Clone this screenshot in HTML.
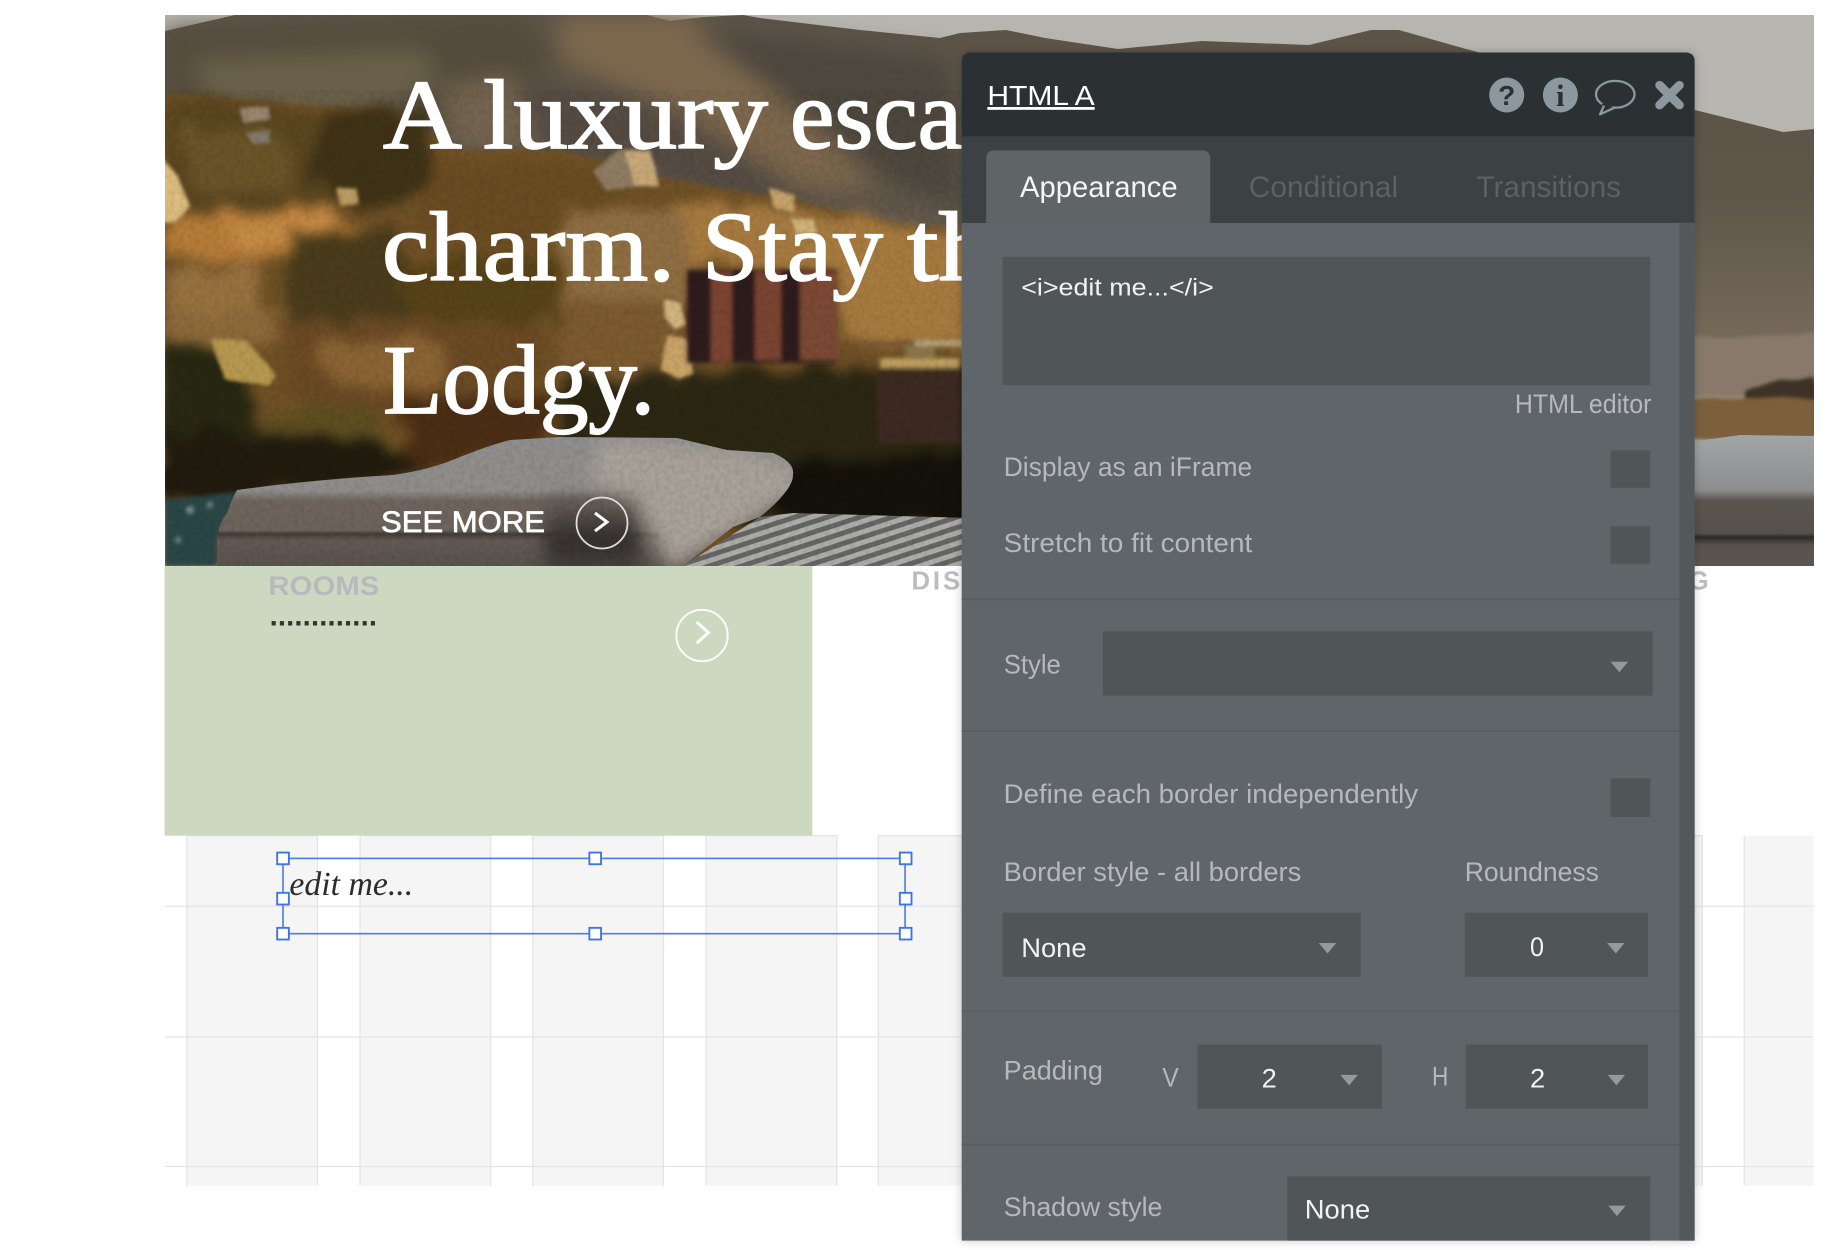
<!DOCTYPE html>
<html lang="en">
<head>
<meta charset="utf-8">
<title>HTML A</title>
<style>
html,body{margin:0;padding:0;background:#fff;width:1830px;height:1250px;overflow:hidden}
svg{display:block;position:absolute;left:0;top:0}
text{font-family:"Liberation Sans",sans-serif}
.lab{font-size:23px;fill:#b5b9bb}
.val{font-size:23px;fill:#f1f2f2}
.sel{fill:#505557}
.tri{fill:#94999c}
.hd{font-family:"Liberation Serif",serif;font-size:99px;fill:#fff;stroke:#fff;stroke-width:1.7px}
</style>
</head>
<body>
<svg width="1830" height="1250" viewBox="0 0 1830 1250" xmlns="http://www.w3.org/2000/svg">
<defs>
<clipPath id="hc"><rect x="165" y="15" width="1649" height="551"/></clipPath>
<clipPath id="towel"><path d="M237 490Q310 480 393 475Q430 470 460 457Q490 445 510 440L560 437L677 438L727 450L773 453Q795 462 793 475Q793 490 760 517L733 527L683 566L217 566L217 540Q218 525 227 513Q232 498 237 490Z"/></clipPath>
<filter id="b3" x="-20%" y="-20%" width="140%" height="140%"><feGaussianBlur stdDeviation="2"/></filter>
<filter id="b7" x="-30%" y="-30%" width="160%" height="160%"><feGaussianBlur stdDeviation="9"/></filter>
<filter id="b14" x="-30%" y="-30%" width="160%" height="160%"><feGaussianBlur stdDeviation="12"/></filter>
<filter id="org" x="-5%" y="-5%" width="110%" height="110%" color-interpolation-filters="sRGB">
<feTurbulence type="fractalNoise" baseFrequency=".03" numOctaves="3" seed="7" result="t"/>
<feDisplacementMap in="SourceGraphic" in2="t" scale="34" xChannelSelector="R" yChannelSelector="G"/>
<feGaussianBlur stdDeviation="6"/>
</filter>
<filter id="org2" x="-5%" y="-5%" width="110%" height="110%" color-interpolation-filters="sRGB">
<feTurbulence type="fractalNoise" baseFrequency=".02" numOctaves="2" seed="3" result="t"/>
<feDisplacementMap in="SourceGraphic" in2="t" scale="8" xChannelSelector="R" yChannelSelector="G"/>
<feGaussianBlur stdDeviation="1.800"/>
</filter>
<filter id="noise" x="0" y="0" width="100%" height="100%">
<feTurbulence type="fractalNoise" baseFrequency=".2" numOctaves="3" seed="4"/>
<feColorMatrix values="0 0 0 0 0  0 0 0 0 0  0 0 0 0 0  1.6 0 0 0 -.55"/>
</filter>
<filter id="ps" x="-5%" y="-5%" width="110%" height="110%"><feDropShadow dx="0" dy="0" stdDeviation="4" flood-color="#000" flood-opacity=".22"/></filter>
<pattern id="roof" width="10" height="10" patternUnits="userSpaceOnUse" patternTransform="rotate(-18)">
<rect width="10" height="10" fill="#666"/><rect width="10" height="5" fill="#adadaa"/>
</pattern>
<linearGradient id="mr" x1="0" y1="0" x2="0" y2="1"><stop offset="0" stop-color="#5c5348"/><stop offset=".55" stop-color="#5f5649"/><stop offset="1" stop-color="#75695a"/></linearGradient>
<linearGradient id="tw" x1="0" y1="0" x2="0" y2="1"><stop offset="0" stop-color="#8f8f8f"/><stop offset=".42" stop-color="#908e8c"/><stop offset=".5" stop-color="#6e655e"/><stop offset=".72" stop-color="#6d645c"/><stop offset=".75" stop-color="#423d39"/><stop offset=".8" stop-color="#635a54"/><stop offset="1" stop-color="#5a524c"/></linearGradient>
<linearGradient id="dk" x1="0" y1="0" x2="0" y2="1"><stop offset="0" stop-color="#6d645c"/><stop offset=".5" stop-color="#2f2c2a"/><stop offset="1" stop-color="#4d4743"/></linearGradient>
<linearGradient id="tr" x1="0" y1="0" x2="0" y2="1"><stop offset="0" stop-color="#a2a5a7"/><stop offset=".42" stop-color="#8d8e8e"/><stop offset=".5" stop-color="#5a5550"/><stop offset=".75" stop-color="#55504b"/><stop offset=".78" stop-color="#2c2927"/><stop offset=".84" stop-color="#57524d"/><stop offset="1" stop-color="#5c5650"/></linearGradient>
</defs>

<!-- HERO PHOTO -->
<g clip-path="url(#hc)">
<rect x="165" y="15" width="1649" height="551" fill="#b7b5b0"/>
<path fill="url(#mr)" d="M165 31L235 15L647 15L670 21L703 17L743 15L760 18L860 30L940 38L960 33L1006 30L1045 38L1118 49L1202 41L1309 45L1371 30L1399 30L1466 49L1695 110L1783 132L1814 129L1814 340L165 340Z"/>
<g filter="url(#b14)">
<path fill="#524c3a" d="M165 30L520 15L560 60L470 130L165 110Z"/>
<path fill="#6b6049" d="M190 60L420 50L440 78L340 135L210 105Z"/>
<path fill="#7d684e" d="M560 15L690 15L780 85L880 190L800 190L680 110L560 60Z"/>
<path fill="#4e463e" d="M690 30L800 40L950 60L960 210L880 175L770 90Z"/>
<path fill="#554b42" d="M470 75L620 90L740 150L840 215L700 190L560 150L470 150Z"/>
<path fill="#74654f" d="M440 90L510 75L540 150L455 150Z"/>
</g>
<!-- foreground hill -->
<path filter="url(#b3)" fill="#6f5128" d="M165 93L240 100L327 107L393 110L460 150L560 150L660 177L793 200L893 223L970 230L970 566L165 566Z"/>
<g filter="url(#org)">
<path fill="#5a4620" d="M165 95L320 110L340 205L165 208Z"/>
<path fill="#6a5428" d="M180 130L280 130L300 190L190 195Z"/>
<path fill="#3f3216" d="M320 110L425 115L440 198L360 205L310 170Z"/>
<path fill="#6a4c22" d="M430 165L620 165L620 260L420 230Z"/>
<path fill="#b67c38" d="M165 215L300 205L385 235L370 258L165 258Z"/>
<path fill="#c68a45" d="M220 220L320 215L345 245L240 250Z"/>
<path fill="#97723f" d="M165 268L255 262L262 320L165 335Z"/>
<path fill="#8d6a3a" d="M165 310L310 315L315 340L165 345Z"/>
<path fill="#4a3c1b" d="M290 235L390 228L430 300L400 335L285 325Z"/>
<path fill="#584318" d="M400 262L560 255L560 320L410 322Z"/>
<path fill="#a77b40" d="M680 200L900 225L970 240L970 345L840 340L840 270L680 265Z"/>
<path fill="#8f6e42" d="M560 205L690 208L690 300L560 300Z"/>
<path fill="#7d5a30" d="M560 300L680 300L690 375L560 375Z"/>
<path fill="#6b4a24" d="M270 325L540 320L540 410L300 405Z"/>
<path fill="#8a6434" d="M320 340L450 340L440 385L330 385Z"/>
<path fill="#5d4f20" d="M262 410L380 405L400 450L270 452Z"/>
<path fill="#282812" d="M160 345L240 345L260 430L240 500L160 500Z"/>
<path fill="#211b0e" d="M160 430L390 445L430 475L240 500L160 505Z"/>
<path fill="#4b2e14" d="M400 400L560 395L540 450L410 470Z"/>
<path fill="#2b2713" d="M560 375L980 365L980 525L560 525Z"/>
<path fill="#14110a" d="M770 465L980 455L980 525L770 525Z"/>
</g>
<!-- rocks -->
<g filter="url(#org2)">
<path fill="#dcbd7f" d="M155 150L178 175L190 205L175 220L155 220Z"/>
<path fill="#8f7c63" d="M592 170L620 150L640 150L640 187L606 190Z"/>
<path fill="#c8a878" d="M625 152L650 150L658 187L632 186Z"/>
<path fill="#9a8670" d="M240 107L268 108L270 120L245 122Z"/>
<path fill="#847a6c" d="M247 132L270 130L270 143L252 144Z"/>
<path fill="#bd9d63" d="M338 188L358 188L358 204L340 206Z"/>
<path fill="#c6a36a" d="M770 190L795 195L795 212L775 208Z"/>
<path fill="#cdb27a" d="M790 218L812 218L815 232L795 234Z"/>
<path fill="#b89850" d="M212 340L245 340L277 375L270 385L225 380Z"/>
<path fill="#caa468" d="M668 335L690 340L695 375L680 380L660 370Z"/>
<path fill="#d3b67f" d="M665 300L680 302L687 325L675 330L665 318Z"/>
</g>
<!-- buildings -->
<g filter="url(#b3)" stroke="none">
<rect x="687" y="270" width="150" height="93" fill="#2e1f1a"/>
<rect x="711" y="272" width="21" height="90" fill="#7b4433"/>
<rect x="755" y="272" width="26" height="88" fill="#7a4533"/>
<rect x="800" y="272" width="37" height="88" fill="#7c4a36"/>
<rect x="877" y="370" width="83" height="73" fill="#3d2b23"/>
<rect x="880" y="358" width="80" height="10" fill="#c0a060"/>
<rect x="860" y="342" width="100" height="5" fill="#7a5634"/>
<rect x="905" y="345" width="30" height="14" fill="#8a744c"/>
<rect x="915" y="340" width="55" height="6" fill="#b7a47d"/>
</g>
<!-- water -->
<path filter="url(#b3)" fill="#2c4747" d="M165 500L237 492L217 540L217 566L165 566Z"/>
<g filter="url(#b3)" fill="#7f908e"><circle cx="190" cy="510" r="4"/><circle cx="210" cy="505" r="3"/><circle cx="178" cy="540" r="3"/></g>
<!-- roof -->
<path fill="url(#roof)" d="M760 517L793 513L970 518L970 566L683 566Z"/>
<!-- towel -->
<g clip-path="url(#towel)">
<rect x="210" y="435" width="590" height="132" fill="url(#tw)"/>
<g filter="url(#b7)">
<path fill="#a9a29a" d="M600 440L740 450L800 470L790 495L740 530L670 570L645 520L620 490L590 480Z"/>
<rect x="545" y="498" width="95" height="80" fill="url(#dk)"/>
</g>
</g>
<!-- right side -->
<g filter="url(#org2)">
<rect x="1680" y="335" width="150" height="62" fill="#88796a"/>
<path fill="#3e3126" d="M1745 392L1780 380L1814 376L1820 398L1745 398Z"/>
<rect x="1680" y="398" width="150" height="42" fill="#7c5f3c"/>
</g>
<path fill="url(#tr)" d="M1690 442L1740 435L1814 436L1814 566L1690 566Z"/>
<rect x="165" y="90" width="800" height="476" filter="url(#noise)" opacity=".1"/>
<!-- hero text -->
<text class="hd" x="383" y="148" textLength="385" lengthAdjust="spacingAndGlyphs">A luxury</text>
<text class="hd" x="790" y="148" textLength="172" lengthAdjust="spacingAndGlyphs">esca</text>
<text class="hd" x="382" y="280" textLength="293" lengthAdjust="spacingAndGlyphs">charm.</text>
<text class="hd" x="702" y="280" textLength="181" lengthAdjust="spacingAndGlyphs">Stay</text>
<text class="hd" x="907" y="280" textLength="88" lengthAdjust="spacingAndGlyphs">th</text>
<text class="hd" x="383" y="413" textLength="272" lengthAdjust="spacingAndGlyphs">Lodgy.</text>
<text x="381" y="532" font-size="30" fill="#fff" stroke="#fff" stroke-width=".7" textLength="164" lengthAdjust="spacingAndGlyphs">SEE MORE</text>
<circle cx="602" cy="523" r="25.5" fill="none" stroke="#dedede" stroke-width="1.8"/>
<path d="M595 513L607 522L595 531" fill="none" stroke="#fff" stroke-width="3"/>
</g>

<!-- LOWER PAGE + PANEL in thumbnail units -->
<g transform="scale(1.16709)">
<!-- grid -->
<g fill="#f5f5f5" stroke="#e3e3e3" stroke-width="1">
<rect x="160" y="716" width="112" height="301"/>
<rect x="308.5" y="716" width="112" height="301"/>
<rect x="456.5" y="716" width="112" height="301"/>
<rect x="605" y="716" width="112" height="301"/>
<rect x="752.5" y="716" width="112" height="301"/>
<rect x="1346.5" y="716" width="112" height="301"/>
<rect x="1494" y="716" width="62" height="301" stroke="none"/>
</g>
<rect x="1494" y="716" width="1" height="301" fill="#e3e3e3"/>
<rect x="1554" y="716" width="14" height="301" fill="#fff"/>
<rect x="160" y="1016" width="1400" height="1.4" fill="#fff"/>
<g fill="#e4e4e4">
<rect x="141" y="776" width="1413" height="1"/>
<rect x="141" y="888" width="1413" height="1"/>
<rect x="141" y="999" width="1413" height="1"/>
</g>
<!-- green block -->
<rect x="141" y="485" width="555" height="231" fill="#cdd8c1"/>
<text x="230" y="510" font-size="23" font-weight="bold" fill="#b9b9bd" textLength="95" lengthAdjust="spacingAndGlyphs">ROOMS</text>
<text x="231" y="536" font-size="25" font-weight="bold" fill="#333" textLength="92" lengthAdjust="spacing">.............</text>
<circle cx="601.5" cy="544.5" r="22" fill="none" stroke="#fff" stroke-width="1.6"/>
<path d="M597 533L607 542L597 551" fill="none" stroke="#fff" stroke-width="2.6"/>
<text x="781" y="505" font-size="22" font-weight="bold" fill="#bcbcc0" textLength="60" lengthAdjust="spacing">DISC</text>
<text x="1447" y="505" font-size="22" font-weight="bold" fill="#bcbcc0">G</text>
<!-- selection -->
<text x="248" y="767" font-style="italic" font-size="29" fill="#2c2c2c" textLength="106" lengthAdjust="spacingAndGlyphs" style="font-family:'Liberation Serif',serif">edit me...</text>
<rect x="242.5" y="735.5" width="533" height="64.5" fill="none" stroke="#4a7fe6" stroke-width="1.4"/>
<g fill="#fff" stroke="#3f73e8" stroke-width="1.6">
<rect x="237.5" y="730.5" width="10" height="10"/>
<rect x="505" y="730.5" width="10" height="10"/>
<rect x="771" y="730.5" width="10" height="10"/>
<rect x="237.5" y="765" width="10" height="10"/>
<rect x="771" y="765" width="10" height="10"/>
<rect x="237.5" y="795" width="10" height="10"/>
<rect x="505" y="795" width="10" height="10"/>
<rect x="771" y="795" width="10" height="10"/>
</g>

<!-- PANEL -->
<path filter="url(#ps)" fill="#5f6567" d="M824 53Q824 45 832 45L1444 45Q1452 45 1452 53L1452 1063L824 1063Z"/>
<path fill="#2b3033" d="M824 53Q824 45 832 45L1444 45Q1452 45 1452 53L1452 117L824 117Z"/>
<rect x="824" y="117" width="628" height="74" fill="#3c4143"/>
<path fill="#5f6567" d="M845 191L845 136Q845 129 852 129L1030 129Q1037 129 1037 136L1037 191Z"/>
<rect x="1439" y="191" width="13" height="872" fill="#53585a"/>
<g fill="#575c5f">
<rect x="824" y="513" width="615" height="1.2"/>
<rect x="824" y="626" width="615" height="1.2"/>
<rect x="824" y="866" width="615" height="1.2"/>
<rect x="824" y="980" width="615" height="1.2"/>
</g>
<text x="846" y="90" font-size="24" fill="#fff" textLength="92" lengthAdjust="spacingAndGlyphs" text-decoration="underline">HTML A</text>

<!-- header icons -->
<circle cx="1291" cy="81.4" r="15" fill="#8d979e"/>
<text x="1291" y="90" font-size="24" font-weight="bold" fill="#2b3033" text-anchor="middle">?</text>
<circle cx="1337" cy="81.4" r="15" fill="#8d979e"/>
<text x="1337" y="91" font-size="26" font-weight="bold" fill="#2b3033" text-anchor="middle" style="font-family:'Liberation Serif',serif">i</text>
<ellipse cx="1384" cy="80.8" rx="16.500" ry="11.500" fill="none" stroke="#8d979e" stroke-width="2"/>
<path d="M1375 89L1371 98L1383 92.500" fill="#2b3033" stroke="#8d979e" stroke-width="2" stroke-linejoin="round"/>
<path d="M1376 86L1381 92L1372 90Z" fill="#2b3033"/>
<path d="M1422 73L1439 90M1439 73L1422 90" stroke="#8d979e" stroke-width="7.500" stroke-linecap="round" fill="none"/>

<!-- tabs -->
<text x="874" y="169" font-size="25" fill="#f4f4f4" textLength="135" lengthAdjust="spacingAndGlyphs">Appearance</text>
<text x="1070" y="169" font-size="25" fill="#5c6164" textLength="128" lengthAdjust="spacingAndGlyphs">Conditional</text>
<text x="1265" y="169" font-size="25" fill="#5c6164" textLength="124" lengthAdjust="spacingAndGlyphs">Transitions</text>

<!-- editor -->
<rect class="sel" x="859" y="220" width="555" height="110"/>
<text x="875" y="253" font-size="21" fill="#f1f2f2" textLength="165" lengthAdjust="spacingAndGlyphs">&lt;i&gt;edit me...&lt;/i&gt;</text>
<text class="lab" x="1298" y="354" font-size="22" textLength="117" lengthAdjust="spacingAndGlyphs">HTML editor</text>

<text class="lab" x="860" y="408" textLength="213" lengthAdjust="spacingAndGlyphs">Display as an iFrame</text>
<rect class="sel" x="1380" y="386" width="34" height="32"/>
<text class="lab" x="860" y="473" textLength="213" lengthAdjust="spacingAndGlyphs">Stretch to fit content</text>
<rect class="sel" x="1380" y="451" width="34" height="32"/>

<text class="lab" x="860" y="577" textLength="49" lengthAdjust="spacingAndGlyphs">Style</text>
<rect class="sel" x="945" y="541" width="471" height="55"/>
<path class="tri" d="M1380 567L1395 567L1387.500 576Z"/>

<text class="lab" x="860" y="688" textLength="355" lengthAdjust="spacingAndGlyphs">Define each border independently</text>
<rect class="sel" x="1380" y="667" width="34" height="33"/>

<text class="lab" x="860" y="755" textLength="255" lengthAdjust="spacingAndGlyphs">Border style - all borders</text>
<text class="lab" x="1255" y="755" textLength="115" lengthAdjust="spacingAndGlyphs">Roundness</text>
<rect class="sel" x="859" y="782" width="307" height="55"/>
<text class="val" x="875" y="820" textLength="56" lengthAdjust="spacingAndGlyphs">None</text>
<path class="tri" d="M1130 808L1145 808L1137.500 817Z"/>
<rect class="sel" x="1255" y="782" width="157" height="55"/>
<text class="val" x="1311" y="819" textLength="12" lengthAdjust="spacingAndGlyphs">0</text>
<path class="tri" d="M1377 808L1392 808L1384.500 817Z"/>

<text class="lab" x="860" y="925" textLength="85" lengthAdjust="spacingAndGlyphs">Padding</text>
<text class="lab" x="996" y="931" textLength="14" lengthAdjust="spacingAndGlyphs">V</text>
<rect class="sel" x="1026" y="895" width="158" height="55"/>
<text class="val" x="1081" y="932" textLength="13" lengthAdjust="spacingAndGlyphs">2</text>
<path class="tri" d="M1148.500 921L1163.500 921L1156 930Z"/>
<text class="lab" x="1227" y="930" textLength="14" lengthAdjust="spacingAndGlyphs">H</text>
<rect class="sel" x="1256" y="895" width="156" height="55"/>
<text class="val" x="1311" y="932" textLength="13" lengthAdjust="spacingAndGlyphs">2</text>
<path class="tri" d="M1377.500 921L1392.500 921L1385 930Z"/>

<text class="lab" x="860" y="1042" textLength="136" lengthAdjust="spacingAndGlyphs">Shadow style</text>
<rect class="sel" x="1103" y="1008" width="311" height="55"/>
<text class="val" x="1118" y="1044" textLength="56" lengthAdjust="spacingAndGlyphs">None</text>
<path class="tri" d="M1378 1033L1393 1033L1385.500 1042Z"/>
</g>
</svg>
</body>
</html>
